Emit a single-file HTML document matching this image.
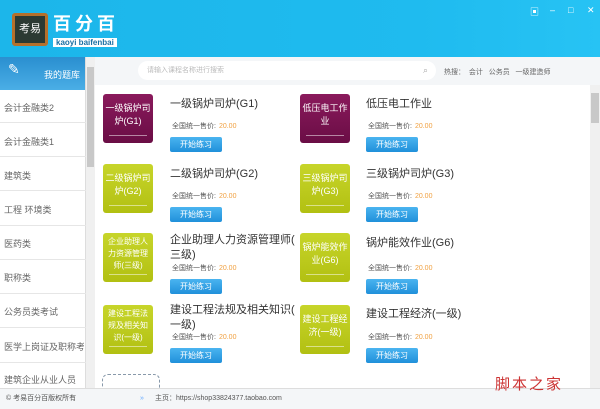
<!DOCTYPE html>
<html><head><meta charset="utf-8"><style>
*{margin:0;padding:0;box-sizing:border-box}
body{width:600px;height:409px;overflow:hidden;font-family:"Liberation Sans","Noto Sans CJK SC",sans-serif;background:#fff;position:relative;font-size:9px;color:#333}
.hdr{position:absolute;left:0;top:0;width:600px;height:57px;background:linear-gradient(90deg,#1cb6ea,#1fbbef 70%,#27c3f4)}
.logo{position:absolute;left:12px;top:13px;width:36px;height:33px;background:#2c3a33;border:3px solid #b5702c;border-radius:3px;color:#fff;font-size:11px;text-align:center;line-height:26px}
.brand{position:absolute;left:53px;top:14px;color:#fff;font-size:18px;font-weight:bold;letter-spacing:4px;line-height:20px}
.sub{position:absolute;left:53px;top:38px;background:#fff;color:#1a6fa3;font-size:8px;font-weight:bold;padding:0 3px;height:9px;line-height:9px}
.ctl{position:absolute;top:5px;color:#fff;font-size:9px}
.side{position:absolute;left:0;top:57px;width:86px;height:331px;background:#fff;border-right:1px solid #ddd}
.tab{position:absolute;left:0;top:57px;width:85px;height:33px;background:linear-gradient(#2a8fd0,#4aaee6);color:#fff;font-size:9px}
.si{position:absolute;left:4px;font-size:9px;color:#666;white-space:nowrap;width:80px;overflow:hidden}
.sl{position:absolute;left:0;width:86px;height:1px;background:#e6e6e6}
.sb{position:absolute;left:86px;top:57px;width:9px;height:331px;background:#f0f0f0}
.main{position:absolute;left:95px;top:57px;width:495px;height:331px;background:#fff}
.top{position:absolute;left:95px;top:57px;width:505px;height:28px;background:#f4f6f8}
.search{position:absolute;left:138px;top:61px;width:298px;height:19px;background:#fff;border-radius:10px;color:#bbb;font-size:7px;line-height:19px;padding-left:9px}
.th{position:absolute;width:50px;height:49px;border-radius:3px;color:#fff;font-size:9px;text-align:center;padding-top:8px;line-height:13px}
.th:after{content:"";position:absolute;left:6px;right:6px;bottom:7px;height:1px;background:rgba(255,255,255,.5)}
.pu{background:linear-gradient(#8a1a5c,#6a0d45)}
.gr{background:linear-gradient(#c7d52a,#b2c012)}
.tt{position:absolute;font-size:11px;color:#333;line-height:15px;white-space:nowrap}
.pr{position:absolute;font-size:7px;color:#555}
.pr b{color:#f0a040;font-weight:normal;margin-left:3px}
.bt{position:absolute;width:52px;height:15px;background:linear-gradient(#4ab4f0,#2090da);color:#fff;font-size:8px;text-align:center;line-height:15px;border-radius:2px}
.rs{position:absolute;left:590px;top:85px;width:10px;height:303px;background:#f0f0f0}
.foot{position:absolute;left:0;top:388px;width:600px;height:21px;background:#f4f6f8;border-top:1px solid #ddd;font-size:7px;color:#555;line-height:20px}
</style></head><body>
<div class="hdr"></div>
<div class="logo">考易</div>
<div class="brand">百分百</div>
<div class="sub">kaoyi baifenbai</div>
<div class="ctl" style="left:530px">▣</div><div class="ctl" style="left:550px">–</div><div class="ctl" style="left:568px">□</div><div class="ctl" style="left:587px">✕</div>
<div class="side"></div>
<div class="tab"><span style="position:absolute;left:8px;top:4px;font-size:14px">✎</span><span style="position:absolute;left:44px;top:11px">我的题库</span></div>
<div class="si" style="top:101px">会计金融类2</div><div class="sl" style="top:122px"></div>
<div class="si" style="top:135px">会计金融类1</div><div class="sl" style="top:156px"></div>
<div class="si" style="top:169px">建筑类</div><div class="sl" style="top:190px"></div>
<div class="si" style="top:203px">工程 环境类</div><div class="sl" style="top:225px"></div>
<div class="si" style="top:237px">医药类</div><div class="sl" style="top:259px"></div>
<div class="si" style="top:271px">职称类</div><div class="sl" style="top:293px"></div>
<div class="si" style="top:305px">公务员类考试</div><div class="sl" style="top:327px"></div>
<div class="si" style="top:340px">医学上岗证及职称考试</div><div class="sl" style="top:362px"></div>
<div class="si" style="top:373px">建筑企业从业人员</div>
<div class="sb"><div style="position:absolute;left:1px;top:10px;width:7px;height:100px;background:#c8c8c8"></div></div>
<div class="main"></div>
<div class="top"></div>
<div class="search">请输入课程名称进行搜索<span style="position:absolute;right:8px;color:#aaa;font-size:9px">⌕</span></div>
<div style="position:absolute;left:444px;top:67px;font-size:7px;color:#666;white-space:nowrap">热搜：&nbsp;&nbsp;会计&nbsp;&nbsp;&nbsp;公务员&nbsp;&nbsp;&nbsp;一级建造师</div>

<div class="th pu" style="left:103px;top:94px">一级锅炉司<br>炉(G1)</div>
<div class="tt" style="left:170px;top:97px">一级锅炉司炉(G1)</div>
<div class="pr" style="left:172px;top:121px">全国统一售价:<b>20.00</b></div>
<div class="bt" style="left:170px;top:137px">开始练习</div>
<div class="th pu" style="left:300px;top:94px">低压电工作<br>业</div>
<div class="tt" style="left:366px;top:97px">低压电工作业</div>
<div class="pr" style="left:368px;top:121px">全国统一售价:<b>20.00</b></div>
<div class="bt" style="left:366px;top:137px">开始练习</div>

<div class="th gr" style="left:103px;top:164px">二级锅炉司<br>炉(G2)</div>
<div class="tt" style="left:170px;top:167px">二级锅炉司炉(G2)</div>
<div class="pr" style="left:172px;top:191px">全国统一售价:<b>20.00</b></div>
<div class="bt" style="left:170px;top:207px">开始练习</div>
<div class="th gr" style="left:300px;top:164px">三级锅炉司<br>炉(G3)</div>
<div class="tt" style="left:366px;top:167px">三级锅炉司炉(G3)</div>
<div class="pr" style="left:368px;top:191px">全国统一售价:<b>20.00</b></div>
<div class="bt" style="left:366px;top:207px">开始练习</div>

<div class="th gr" style="left:103px;top:233px;padding-top:3px;font-size:8px;line-height:12px">企业助理人<br>力资源管理<br>师(三级)</div>
<div class="tt" style="left:170px;top:233px">企业助理人力资源管理师(<br>三级)</div>
<div class="pr" style="left:172px;top:263px">全国统一售价:<b>20.00</b></div>
<div class="bt" style="left:170px;top:279px">开始练习</div>
<div class="th gr" style="left:300px;top:233px">锅炉能效作<br>业(G6)</div>
<div class="tt" style="left:366px;top:236px">锅炉能效作业(G6)</div>
<div class="pr" style="left:368px;top:263px">全国统一售价:<b>20.00</b></div>
<div class="bt" style="left:366px;top:279px">开始练习</div>

<div class="th gr" style="left:103px;top:305px;padding-top:3px;font-size:8px;line-height:12px">建设工程法<br>规及相关知<br>识(一级)</div>
<div class="tt" style="left:170px;top:303px">建设工程法规及相关知识(<br>一级)</div>
<div class="pr" style="left:172px;top:332px">全国统一售价:<b>20.00</b></div>
<div class="bt" style="left:170px;top:348px">开始练习</div>
<div class="th gr" style="left:300px;top:305px">建设工程经<br>济(一级)</div>
<div class="tt" style="left:366px;top:307px">建设工程经济(一级)</div>
<div class="pr" style="left:368px;top:332px">全国统一售价:<b>20.00</b></div>
<div class="bt" style="left:366px;top:348px">开始练习</div>

<div style="position:absolute;left:102px;top:374px;width:58px;height:20px;border:1px dashed #8899aa;border-bottom:none;border-radius:6px 6px 0 0"></div>
<div class="rs"><div style="position:absolute;left:1px;top:8px;width:8px;height:30px;background:#c8c8c8"></div></div>
<div class="foot"><span style="margin-left:6px">© 考易百分百版权所有</span><span style="position:absolute;left:140px;color:#6af">»</span><span style="position:absolute;left:155px">主页：https://shop33824377.taobao.com</span><span style="position:absolute;left:495px;top:-14px;color:#c33;font-size:15px;letter-spacing:2px">脚本之家</span></div>
</body></html>
